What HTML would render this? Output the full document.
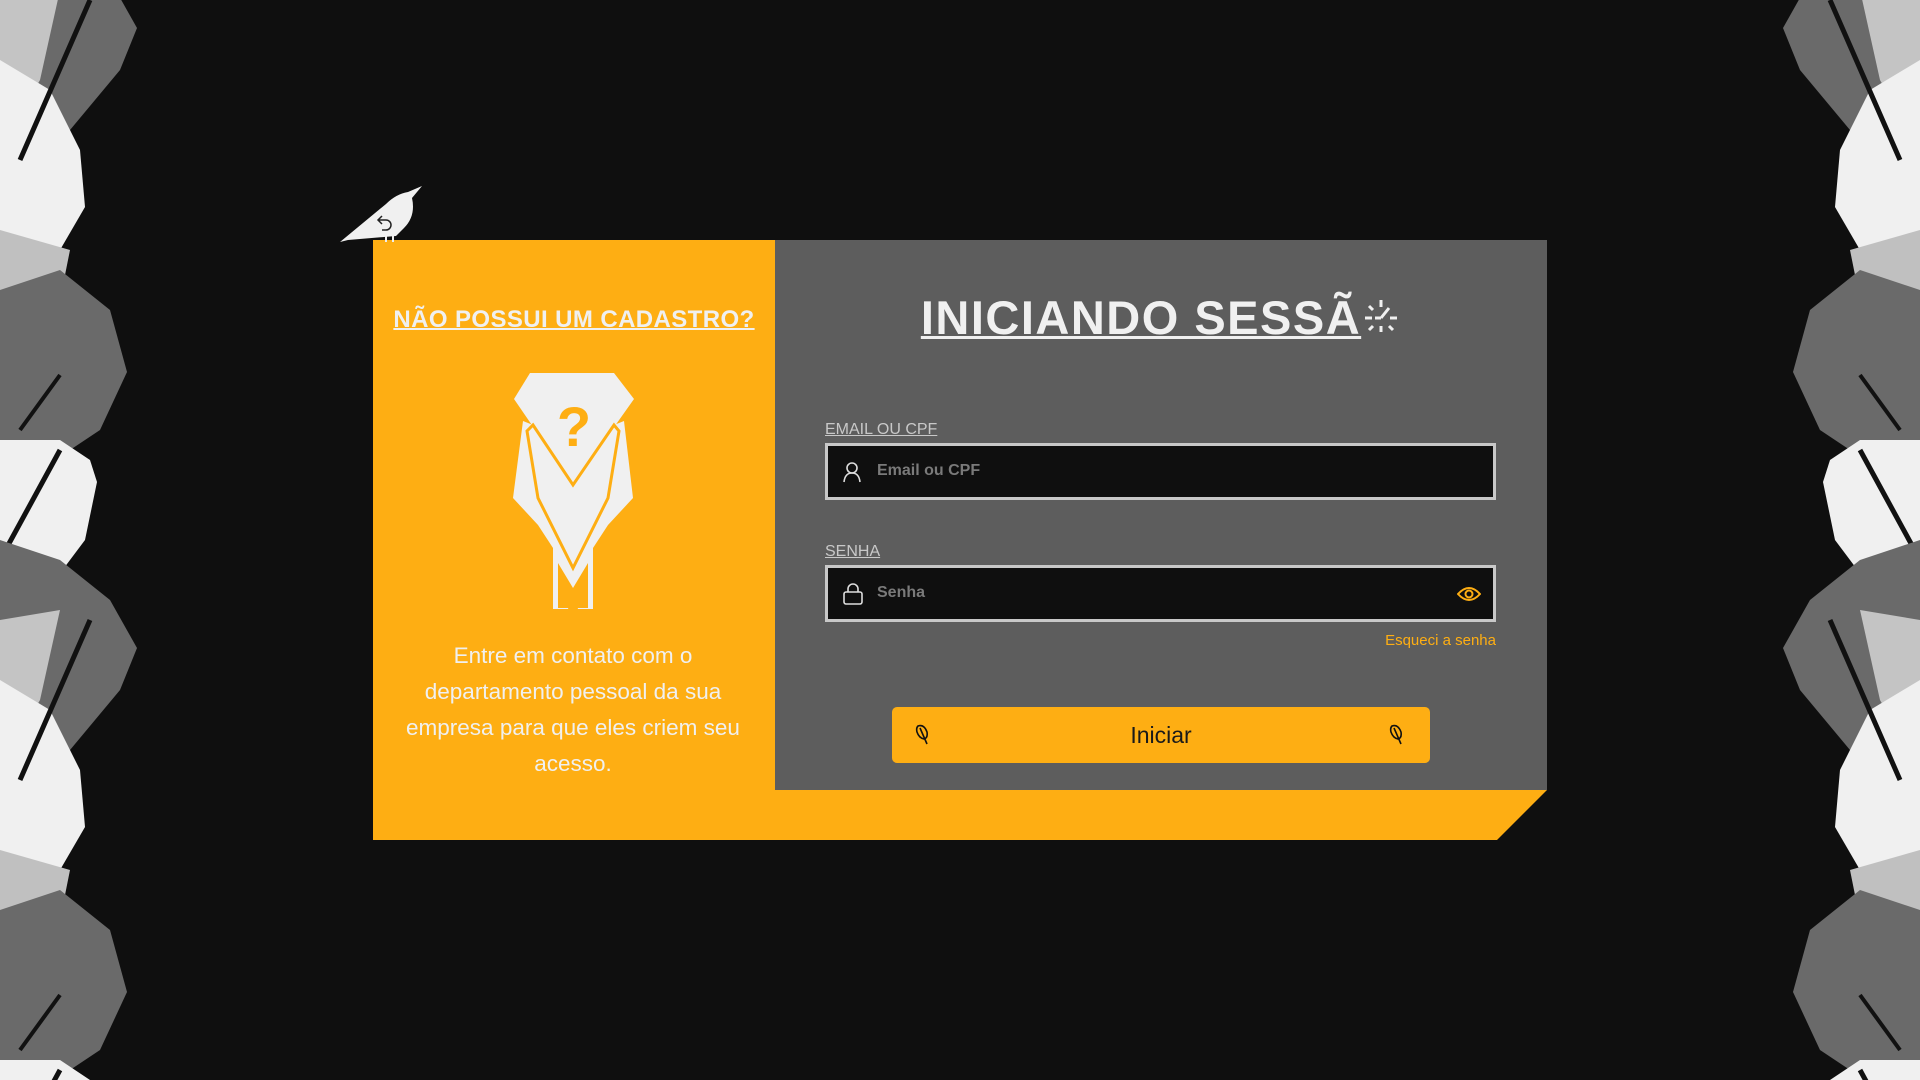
<!DOCTYPE html>
<html style="overflow:hidden;width:1920px;height:1080px"><head><meta charset="utf-8"><style>
*{margin:0;padding:0;box-sizing:border-box}
body{width:1920px;height:1080px;background:#0f0f0f;position:relative;overflow:hidden;font-family:"Liberation Sans",sans-serif}
.side{position:absolute;top:0;width:160px;height:1080px;display:block}
#card{position:absolute;left:373px;top:240px;width:1174px;height:600px;background:#feae13;clip-path:polygon(0 0,100% 0,100% 550px,1124px 600px,0 600px)}
#gray{position:absolute;left:775px;top:240px;width:772px;height:550px;background:#5d5d5d}
.h1{position:absolute;left:373px;width:402px;top:306px;text-align:center;color:#f0f0f0;font-weight:bold;font-size:24px;text-decoration:underline;text-decoration-thickness:2px;letter-spacing:0.4px}
.para{position:absolute;left:395px;width:356px;top:638px;text-align:center;color:#f0f0f0;font-size:22.5px;line-height:36px}
.title{position:absolute;left:775px;width:772px;top:290px;text-align:center;color:#f0f0f0;font-weight:bold;font-size:47px;letter-spacing:1.5px}
.title span{text-decoration:underline;text-decoration-thickness:3px}
.lbl{position:absolute;left:825px;color:#c8c8c8;font-size:16px;text-decoration:underline}
.inp{position:absolute;left:825px;width:671px;height:57px;border:3px solid #c8c8c8;background:#0f0f0f}
.inp .t{position:absolute;left:49px;top:16px;color:#7a7a7a;font-size:16px;font-weight:bold}
.forgot{position:absolute;right:424px;top:632px;color:#feae13;font-size:15px}
.btn{position:absolute;left:892px;top:707px;width:538px;height:56px;background:#feae13;border-radius:5px;text-align:center;line-height:56px;font-size:23px;color:#1a1a1a}
</style></head><body>
<svg class="side" style="left:0" viewBox="0 0 160 1080">
<g id="f">
<polygon points="0,-80 60,-60 110,-20 137,28 120,70 70,130 20,190 0,210" fill="#6a6a6a"/>
<polygon points="0,0 60,-10 40,80 0,150" fill="#c4c4c4"/>
<polygon points="0,60 50,90 80,150 85,207 60,250 30,290 0,320" fill="#f0f0f0"/>
<polygon points="0,230 70,250 60,300 20,330 0,340" fill="#c0c0c0"/>
<polygon points="0,290 60,270 110,310 127,372 100,430 40,470 0,480" fill="#6a6a6a"/>
<polygon points="0,440 60,440 90,460 97,482 85,540 40,600 0,620" fill="#f0f0f0"/>
<line x1="0" y1="560" x2="60" y2="450" stroke="#111" stroke-width="5"/>
<line x1="20" y1="160" x2="90" y2="0" stroke="#111" stroke-width="5"/>
<line x1="20" y1="430" x2="60" y2="375" stroke="#111" stroke-width="4"/>
</g>
<use href="#f" y="620"/>
</svg>
<svg class="side" style="left:1760px" viewBox="0 0 160 1080"><g transform="translate(160,0) scale(-1,1)"><use href="#f" y="0"/><use href="#f" y="620"/></g></svg>
<div id="card"></div>
<div id="gray"></div>
<svg style="position:absolute;left:338px;top:186px" width="86" height="56" viewBox="0 0 86 56">
<path d="M2,56 L48,18 Q58,8 70,6 L84,0 L74,12 Q78,30 66,42 L58,50 L10,54 Z" fill="#f0f0f0"/>
<path d="M48,50 v6 M55,50 v6" stroke="#f0f0f0" stroke-width="2"/>
<path d="M44,30 l-4,4 4,4 M40,34 h8 a5,5 0 0 1 0,10 h-4" fill="none" stroke="#222" stroke-width="1.5"/>
</svg>
<div class="h1">NÃO POSSUI UM CADASTRO?</div>
<svg style="position:absolute;left:513px;top:373px" width="122" height="236" viewBox="0 0 122 236">
<polygon points="17,0 101,0 121,26 60,112 1,26" fill="#f0f0f0"/>
<polygon points="10,48 20,52 60,112 101,52 111,48 120,125 95,152 80,175 80,236 65,236 60,220 55,236 40,236 40,175 25,152 0,125" fill="#f0f0f0"/>
<polygon points="20,52 60,112 101,52 106,58 95,125 60,195 25,125 14,58" fill="none" stroke="#feae13" stroke-width="3"/>
<text x="61" y="73" text-anchor="middle" font-family="Liberation Sans" font-weight="bold" font-size="56" fill="#feae13">?</text>
<polygon points="45,235 45,190 60,215 75,190 75,235" fill="#feae13"/>
</svg>
<div class="para">Entre em contato com o departamento pessoal da sua empresa para que eles criem seu acesso.</div>
<div class="title"><span>INICIANDO SESSÃ<svg width="40" height="40" viewBox="0 0 40 40" style="vertical-align:-2px"><g stroke="#f0f0f0" stroke-width="3"><path d="M20,4v7M8,10l4,4M4,22h7M8,34l4,-4M20,36v-6M32,34l-4,-4M36,22h-7"/><path d="M20,22 l8,-10" /><path d="M20,22 h-6"/></g></svg></span></div>
<div class="lbl" style="top:421px">EMAIL OU CPF</div>
<div class="inp" style="top:443px"><svg style="position:absolute;left:14px;top:15px" width="20" height="22" viewBox="0 0 20 22"><circle cx="10" cy="7" r="5" fill="none" stroke="#ddd" stroke-width="1.6"/><path d="M2,21 Q3,12 10,12 Q17,12 18,21" fill="none" stroke="#ddd" stroke-width="1.6"/></svg><span class="t">Email ou CPF</span></div>
<div class="lbl" style="top:543px">SENHA</div>
<div class="inp" style="top:565px"><svg style="position:absolute;left:14px;top:14px" width="22" height="24" viewBox="0 0 22 24"><rect x="2" y="10" width="18" height="12" rx="2" fill="none" stroke="#ddd" stroke-width="1.6"/><path d="M6,10 V7 a5,5 0 0 1 10,0 V10" fill="none" stroke="#ddd" stroke-width="1.6"/></svg><span class="t">Senha</span>
<svg style="position:absolute;right:12px;top:16px" width="24" height="20" viewBox="0 0 24 20"><path d="M1,10 Q12,-2 23,10 Q12,22 1,10Z" fill="none" stroke="#feae13" stroke-width="2"/><circle cx="12" cy="10" r="3.5" fill="none" stroke="#feae13" stroke-width="2"/></svg></div>
<div class="forgot">Esqueci a senha</div>
<div class="btn">Iniciar
<svg style="position:absolute;left:22px;top:17px" width="16" height="22" viewBox="0 0 16 22"><path d="M4,2 Q10,0 13,8 Q14,14 10,15 Q5,14 3,8 Q2,4 4,2Z M6,4 L13,20" fill="none" stroke="#111" stroke-width="1.6"/></svg>
<svg style="position:absolute;right:26px;top:17px" width="16" height="22" viewBox="0 0 16 22"><path d="M4,2 Q10,0 13,8 Q14,14 10,15 Q5,14 3,8 Q2,4 4,2Z M6,4 L13,20" fill="none" stroke="#111" stroke-width="1.6"/></svg></div>
</body></html>
